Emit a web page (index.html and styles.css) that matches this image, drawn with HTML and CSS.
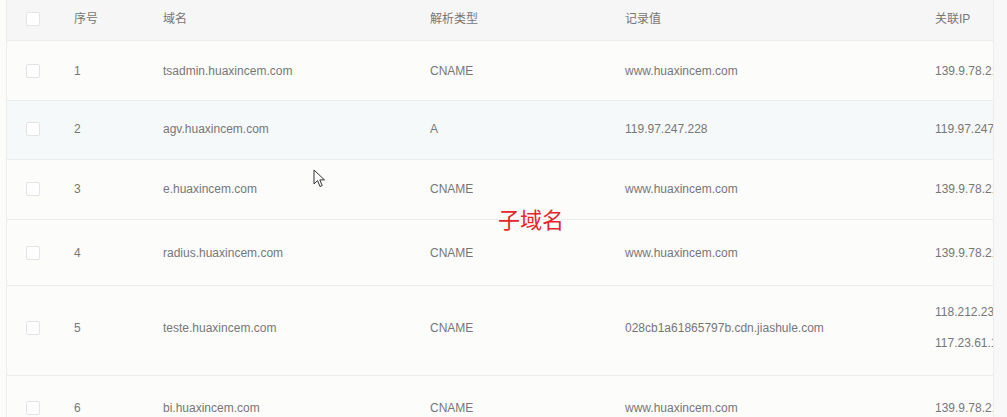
FILE: index.html
```html
<!DOCTYPE html>
<html lang="zh-CN">
<head>
	<meta charset="UTF-8">
	<title>子域名</title>
	<link rel="stylesheet" href="styles.css">
</head>
<body>
	<div class="page">
		<div class="table">
			<div class="row head">
				<div class="cell c1"><span class="check"></span></div>
				<div class="cell">序号</div>
				<div class="cell">域名</div>
				<div class="cell">解析类型</div>
				<div class="cell">记录值</div>
				<div class="cell">关联IP</div>
			</div>
			<div class="row r1">
				<div class="cell c1"><span class="check"></span></div>
				<div class="cell">1</div>
				<div class="cell">tsadmin.huaxincem.com</div>
				<div class="cell">CNAME</div>
				<div class="cell">www.huaxincem.com</div>
				<div class="cell">139.9.78.212</div>
			</div>
			<div class="row r2 hover">
				<div class="cell c1"><span class="check"></span></div>
				<div class="cell">2</div>
				<div class="cell">agv.huaxincem.com</div>
				<div class="cell">A</div>
				<div class="cell">119.97.247.228</div>
				<div class="cell">119.97.247.228</div>
			</div>
			<div class="row r3">
				<div class="cell c1"><span class="check"></span></div>
				<div class="cell">3</div>
				<div class="cell">e.huaxincem.com</div>
				<div class="cell">CNAME</div>
				<div class="cell">www.huaxincem.com</div>
				<div class="cell">139.9.78.212</div>
			</div>
			<div class="row r4">
				<div class="cell c1"><span class="check"></span></div>
				<div class="cell">4</div>
				<div class="cell">radius.huaxincem.com</div>
				<div class="cell">CNAME</div>
				<div class="cell">www.huaxincem.com</div>
				<div class="cell">139.9.78.212</div>
			</div>
			<div class="row r5">
				<div class="cell c1"><span class="check"></span></div>
				<div class="cell">5</div>
				<div class="cell">teste.huaxincem.com</div>
				<div class="cell">CNAME</div>
				<div class="cell">028cb1a61865797b.cdn.jiashule.com</div>
				<div class="cell ips"><span>118.212.233.1</span><span>117.23.61.120</span></div>
			</div>
			<div class="row r6">
				<div class="cell c1"><span class="check"></span></div>
				<div class="cell">6</div>
				<div class="cell">bi.huaxincem.com</div>
				<div class="cell">CNAME</div>
				<div class="cell">www.huaxincem.com</div>
				<div class="cell">139.9.78.212</div>
			</div>

			<div class="note">子域名</div>
			<svg class="cursor" width="13" height="19" viewBox="0 0 13 19">
				<path d="M1 1 L1 15 L4.5 11.6 L7 17.5 L9.2 16.6 L6.8 10.9 L11.5 10.9 Z" fill="#fff" stroke="#333" stroke-width="1" stroke-linejoin="round"/>
			</svg>
		</div>
		<div class="scroll"></div>
	</div>
</body>
</html>
```

FILE: styles.css
```css
* {
	margin: 0;
	padding: 0;
	box-sizing: border-box;
}

body {
	background: #fcfcfb;
	font-family: "Liberation Sans", "Noto Sans CJK SC", sans-serif;
	font-size: 12px;
	color: #777;
	overflow: hidden;
}

.page {
	display: flex;
	height: 417px;
	padding-left: 6px;
}

.table {
	position: relative;
	width: 988px;
	border-left: 1px solid #ececec;
	border-right: 1px solid #ececec;
	overflow: hidden;
}

.row {
	display: grid;
	grid-template-columns: 47px 89px 267px 195px 310px 120px;
	align-items: center;
	border-bottom: 1px solid #ececec;
	white-space: nowrap;
}

.cell {
	padding-left: 20px;
	line-height: 16px;
}

.c1 {
	padding-left: 19px;
	display: flex;
	align-items: center;
}

.check {
	display: block;
	width: 14px;
	height: 14px;
	background: #fff;
	border: 1px solid #e4e4e4;
	border-radius: 2px;
}

.head {
	height: 41px;
	background: #f6f6f6;
	padding-bottom: 3px;
}

.r1 { height: 60px; }
.r2 { height: 59px; padding-bottom: 2px; }
.r3 { height: 60px; padding-bottom: 2px; }
.r4 { height: 66px; }
.r5 { height: 90px; padding-bottom: 6px; }
.r6 { height: 60px; padding-top: 4px; }

.hover {
	background: #f6f9f9;
}

.ips span {
	display: block;
	line-height: 31px;
}

.note {
	position: absolute;
	left: 491px;
	top: 203px;
	font-family: "Noto Sans CJK SC", sans-serif;
	font-size: 22px;
	line-height: 30px;
	color: #e8232b;
}

.cursor {
	position: absolute;
	left: 306px;
	top: 169px;
}

.scroll {
	width: 13px;
	background: #f8f8f8;
}
```
